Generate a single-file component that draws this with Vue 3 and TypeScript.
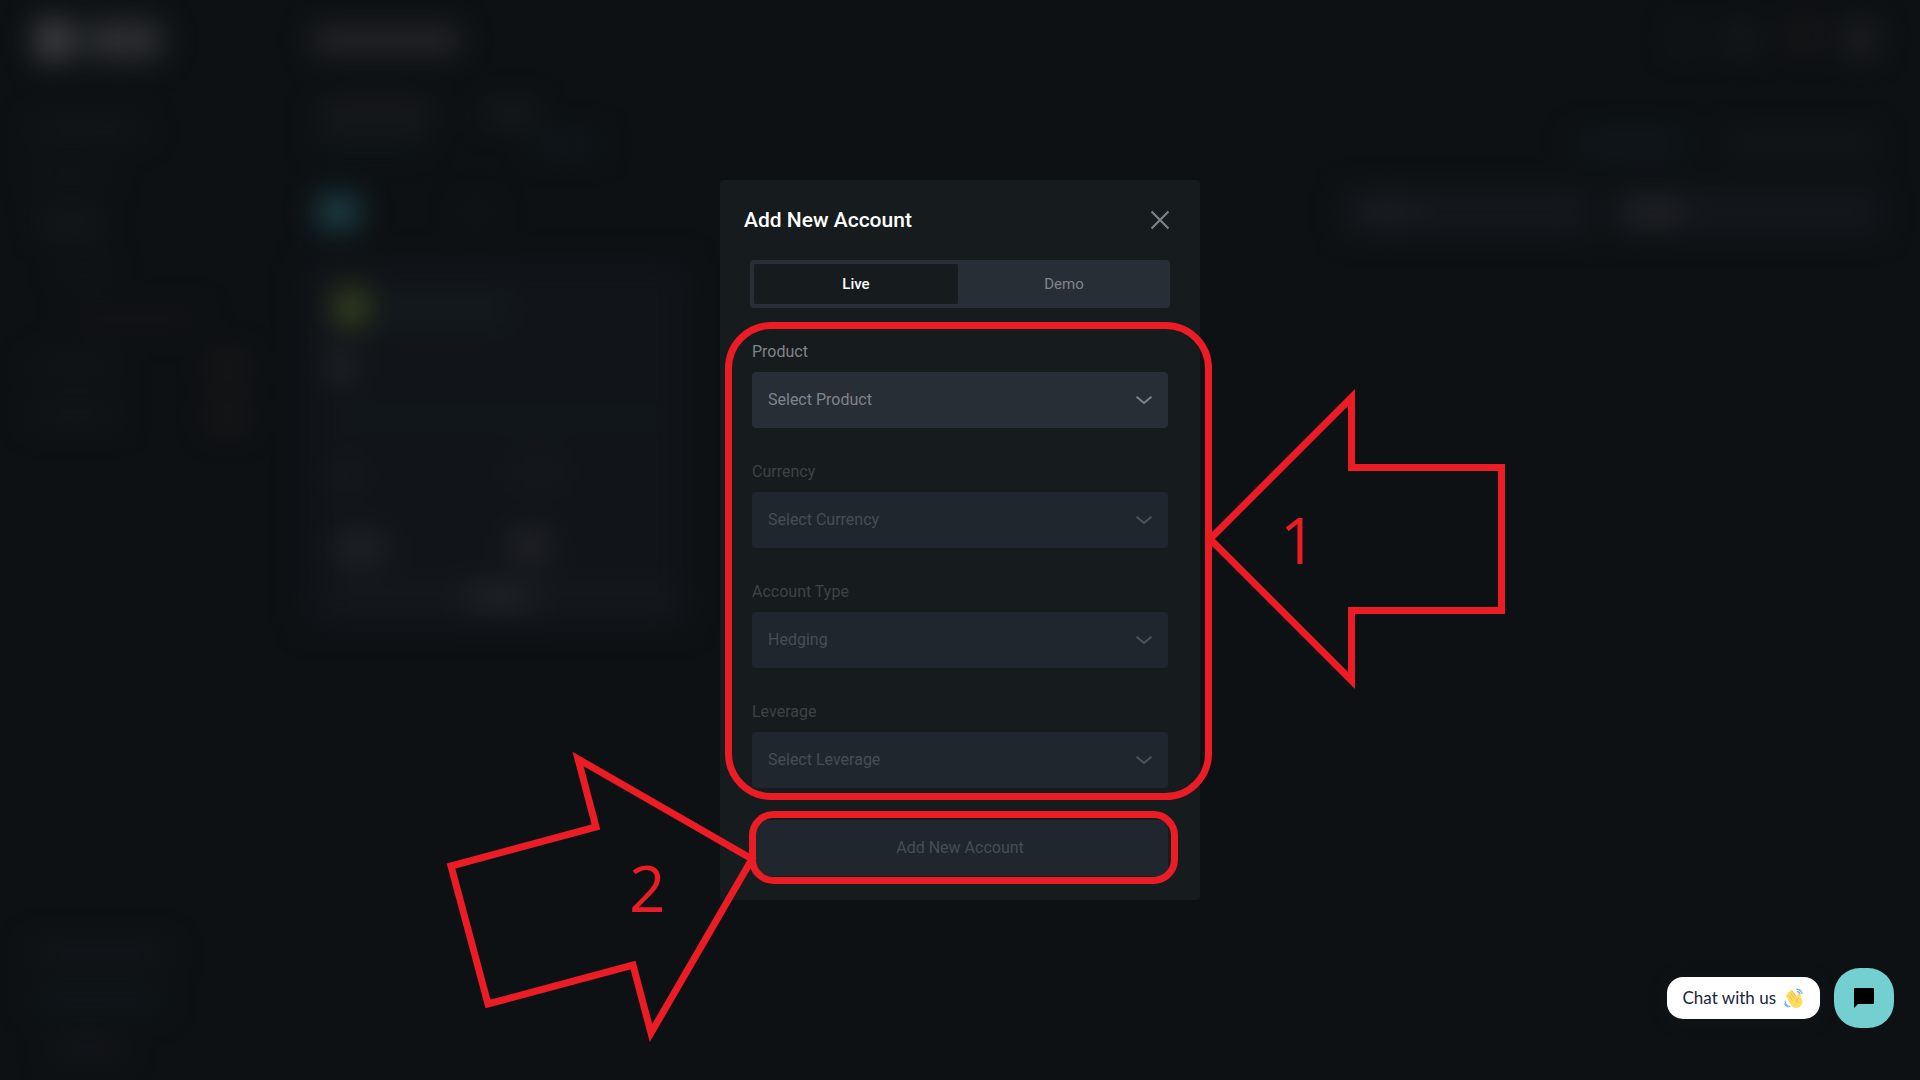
<script setup lang="ts">
import { ref } from 'vue'

interface Field {
  id: string
  label: string
  value: string
  disabled: boolean
}

interface Blob {
  x: number
  y: number
  w: number
  h: number
  fill: string
}

const mode = ref<'Live' | 'Demo'>('Live')
const modes: Array<'Live' | 'Demo'> = ['Live', 'Demo']

const fields: Field[] = [
  { id: 'product', label: 'Product', value: 'Select Product', disabled: false },
  { id: 'currency', label: 'Currency', value: 'Select Currency', disabled: true },
  { id: 'account-type', label: 'Account Type', value: 'Hedging', disabled: true },
  { id: 'leverage', label: 'Leverage', value: 'Select Leverage', disabled: true },
]

// Soft shapes of the dashboard that sits behind the dialog.
const blobs: Blob[] = [
  // logo and page title
  { x: 36, y: 20, w: 36, h: 40, fill: '#424347' },
  { x: 84, y: 22, w: 78, h: 36, fill: '#2f3132' },
  { x: 312, y: 28, w: 148, h: 24, fill: '#28282c' },
  // navigation
  { x: 30, y: 120, w: 115, h: 18, fill: '#14171a' },
  { x: 30, y: 166, w: 80, h: 18, fill: '#131518' },
  { x: 40, y: 214, w: 62, h: 18, fill: '#191b1e' },
  { x: 60, y: 262, w: 50, h: 16, fill: '#131619' },
  { x: 70, y: 310, w: 130, h: 18, fill: '#131417' },
  { x: 30, y: 358, w: 90, h: 18, fill: '#131619' },
  { x: 30, y: 406, w: 90, h: 18, fill: '#14171a' },
  { x: 210, y: 354, w: 36, h: 28, fill: '#1b1817' },
  { x: 210, y: 402, w: 36, h: 28, fill: '#1b1817' },
  { x: 30, y: 943, w: 140, h: 20, fill: '#14161a' },
  { x: 30, y: 990, w: 135, h: 20, fill: '#10171b' },
  { x: 50, y: 1038, w: 75, h: 20, fill: '#14161a' },
  // tabs and intro
  { x: 318, y: 104, w: 116, h: 18, fill: '#1d1e21' },
  { x: 485, y: 104, w: 50, h: 18, fill: '#1a1e20' },
  { x: 315, y: 134, w: 110, h: 14, fill: '#11181b' },
  { x: 530, y: 136, w: 70, h: 16, fill: '#10191d' },
  { x: 318, y: 196, w: 40, h: 32, fill: '#1f464e' },
  { x: 460, y: 204, w: 34, h: 16, fill: '#151618' },
  // account card
  { x: 306, y: 262, w: 380, h: 364, fill: '#11151a' },
  { x: 334, y: 290, w: 34, h: 34, fill: '#3a461f' },
  { x: 385, y: 292, w: 125, h: 34, fill: '#13191c' },
  { x: 328, y: 352, w: 24, h: 28, fill: '#25262c' },
  { x: 330, y: 412, w: 345, h: 14, fill: '#12171c' },
  { x: 328, y: 464, w: 34, h: 24, fill: '#171a1e' },
  { x: 508, y: 460, w: 60, h: 24, fill: '#15191d' },
  { x: 334, y: 534, w: 52, h: 28, fill: '#202428' },
  { x: 512, y: 532, w: 36, h: 28, fill: '#242528' },
  { x: 330, y: 584, w: 350, h: 30, fill: '#15191e' },
  { x: 470, y: 586, w: 62, h: 22, fill: '#22272c' },
  // top-right tools and filters
  { x: 1672, y: 28, w: 26, h: 22, fill: '#14171a' },
  { x: 1728, y: 26, w: 28, h: 26, fill: '#191b1f' },
  { x: 1790, y: 22, w: 28, h: 26, fill: '#1c1717' },
  { x: 1844, y: 24, w: 32, h: 30, fill: '#202125' },
  { x: 1575, y: 134, w: 110, h: 20, fill: '#10191d' },
  { x: 1725, y: 134, w: 150, h: 20, fill: '#14171a' },
  { x: 1345, y: 192, w: 245, h: 40, fill: '#15191e' },
  { x: 1362, y: 202, w: 54, h: 20, fill: '#1b1f23' },
  { x: 1612, y: 192, w: 268, h: 40, fill: '#14181d' },
  { x: 1625, y: 200, w: 56, h: 24, fill: '#222428' },
]
</script>

<template>
  <div class="page">
    <svg class="backdrop" viewBox="0 0 1920 1080" preserveAspectRatio="xMidYMid slice" aria-hidden="true">
      <defs>
        <filter id="soften" x="-10%" y="-10%" width="120%" height="120%" color-interpolation-filters="sRGB">
          <feGaussianBlur stdDeviation="15" />
        </filter>
      </defs>
      <g filter="url(#soften)">
        <rect v-for="(b, i) in blobs" :key="i" :x="b.x" :y="b.y" :width="b.w" :height="b.h" :fill="b.fill" rx="6" />
      </g>
    </svg>

    <main class="stage">
      <section class="dialog" role="dialog" aria-labelledby="dialog-title">
        <header class="dialog-head">
          <h1 id="dialog-title">Add New Account</h1>
          <button class="close" type="button" aria-label="Close">
            <svg width="20" height="20" viewBox="0 0 20 20" fill="none" stroke="currentColor" stroke-width="2">
              <path d="M1.5 1.5 18.5 18.5M18.5 1.5 1.5 18.5" />
            </svg>
          </button>
        </header>

        <div class="tabs">
          <button
            v-for="m in modes"
            :key="m"
            type="button"
            class="tab"
            :class="{ active: mode === m }"
            @click="mode = m"
          >{{ m }}</button>
        </div>

        <form class="form" @submit.prevent>
          <div v-for="f in fields" :key="f.id" class="field" :class="{ off: f.disabled }">
            <label :for="f.id">{{ f.label }}</label>
            <div class="control">
              <select :id="f.id" :disabled="f.disabled">
                <option>{{ f.value }}</option>
              </select>
              <svg class="chevron" width="16" height="10" viewBox="0 0 16 10" fill="none" stroke="currentColor" stroke-width="2">
                <path d="M.5 1.700 8 8l7.500-6.300" />
              </svg>
            </div>
          </div>
          <button class="submit" type="submit" disabled>Add New Account</button>
        </form>

        <svg class="marks" width="480" height="720" viewBox="0 0 480 720" aria-hidden="true">
          <g fill="none" stroke="#ec1c24" stroke-width="7" stroke-miterlimit="10">
            <rect x="8.5" y="145.5" width="480" height="471" rx="43" />
            <rect x="32.5" y="634.5" width="422" height="66" rx="21" />
            <path d="M490 359 631.5 217.5V287.5H781.5V430.5H631.5V500.5Z" />
            <path d="M32 679-142 579-124 647-269 686-232 824-87 785-69 853Z" />
          </g>
          <text x="560" y="384">1</text>
          <text x="-91" y="732">2</text>
        </svg>
      </section>
    </main>

    <aside class="chat">
      <button class="bubble" type="button">
        <span>Chat with us</span>
        <svg width="20" height="20" viewBox="0 0 36 36" aria-hidden="true">
          <path
            fill="#ffdc5d"
            d="M4.9 11.9c1-.7 2.5-.5 3.300.6l-1.100-1.600c-.8-1.100-.5-2.700.6-3.500 1.100-.8 2.700-.5 3.500.6l.7 1-.9-2.200c-.7-1.200-.2-2.600.9-3.300 1.200-.7 2.700-.3 3.400.9l9.200 13.300c-1.700-4.500-1.200-7.700 1.600-8.900 1.300-.5 2.600-.1 3 1.400.6 2.300 1.100 5.500 2.700 9.200 2.600 6.500 1.200 11.200-4.300 14.900-5.200 3.500-11.300 1.900-15-3.500L4.300 15.400c-.8-1.200-.5-2.700.6-3.500z"
          />
          <path
            fill="none"
            stroke="#ef9645"
            stroke-width="1"
            stroke-linecap="round"
            d="m8.200 12.500 6.700 9.400M11.900 9l6.700 9.500M15 6l7.300 10.500M26 17.500c-3.500 2-4.500 5.500-2.600 8.500"
          />
          <path
            fill="none"
            stroke="#5dadec"
            stroke-width="2"
            stroke-linecap="round"
            d="M23 2.500c4.500-.2 8 2.500 9.500 7M24 6.500c2.500 0 4.200 1.500 5 3.500M2 23.500c.5 5 4 9 9 9.800M1.500 28.500c.8 3 2.600 5 5.500 5.800"
          />
        </svg>
      </button>
      <button class="launcher" type="button" aria-label="Open chat">
        <svg width="20" height="20" viewBox="0 0 20 20" aria-hidden="true">
          <path d="M1 0h18a1 1 0 0 1 1 1v14a1 1 0 0 1-1 1H4l-4 4V1a1 1 0 0 1 1-1z" />
        </svg>
      </button>
    </aside>
  </div>
</template>

<style>
body {
  background: #0d1114;
}
</style>

<style scoped>
.page {
  position: relative;
  min-height: 100vh;
  overflow: hidden;
  background: #0d1114;
  color: #80848a;
  font: 16px/24px Roboto, "Liberation Sans", sans-serif;
}

button,
select {
  margin: 0;
  border: 0;
  font: inherit;
  color: inherit;
}

svg {
  display: block;
}

.backdrop {
  position: absolute;
  inset: 0;
  width: 100%;
  height: 100%;
}

.stage {
  position: relative;
  display: flex;
  align-items: center;
  justify-content: center;
  min-height: 100vh;
}

.dialog {
  position: relative;
  box-sizing: border-box;
  width: 480px;
  padding: 24px;
  border-radius: 4px;
  background: #161b1e;
}

.dialog-head {
  display: flex;
  align-items: center;
  justify-content: space-between;
  height: 32px;
  padding-right: 6px;
}

h1 {
  margin: 0;
  font-size: 21px;
  line-height: 32px;
  font-weight: 500;
  color: #fff;
}

.close {
  padding: 0;
  background: none;
  color: #80848a;
}

.tabs {
  display: flex;
  gap: 4px;
  margin: 24px 6px 0;
  padding: 4px;
  border-radius: 4px;
  background: #272e36;
}

.tab {
  flex: 1;
  height: 40px;
  padding: 0;
  border-radius: 2px;
  background: none;
  font-size: 15px;
}

.tab.active {
  background: #161b1e;
  color: #fff;
  font-weight: 500;
}

.form {
  display: flex;
  flex-direction: column;
  gap: 32px;
  margin: 32px 8px 0;
}

.field {
  display: flex;
  flex-direction: column;
  gap: 8px;
}

.control {
  position: relative;
}

select {
  width: 100%;
  height: 56px;
  padding: 0 48px 0 16px;
  border-radius: 4px;
  appearance: none;
  background: #272e36;
}

.chevron {
  position: absolute;
  top: 23px;
  right: 16px;
  pointer-events: none;
}

.off {
  color: #3f4347;
}

.off select {
  background: #20262d;
  color: #484d54;
  opacity: 1;
}

.off .chevron {
  color: #50555c;
}

.submit {
  height: 56px;
  border-radius: 4px;
  background: #20262d;
  color: #484d54;
}

.marks {
  position: absolute;
  inset: 0;
  overflow: visible;
  pointer-events: none;
}

.marks text {
  fill: #ec1c24;
  font-family: "Open Sans", "Noto Sans", sans-serif;
  font-size: 64px;
}

.chat {
  position: absolute;
  right: 26px;
  bottom: 52px;
  display: flex;
  align-items: center;
  gap: 14px;
}

.bubble {
  display: flex;
  align-items: center;
  gap: 8px;
  height: 42px;
  padding: 0 16px;
  border-radius: 16px;
  background: #fff;
  box-shadow: 0 2px 16px #12161a;
  color: #1b2640;
  font: 17px/24px Lato, "Open Sans", sans-serif;
}

.launcher {
  display: grid;
  place-items: center;
  width: 60px;
  height: 60px;
  padding: 0;
  border-radius: 26px;
  background: #74cfd0;
  color: #000;
}
</style>
